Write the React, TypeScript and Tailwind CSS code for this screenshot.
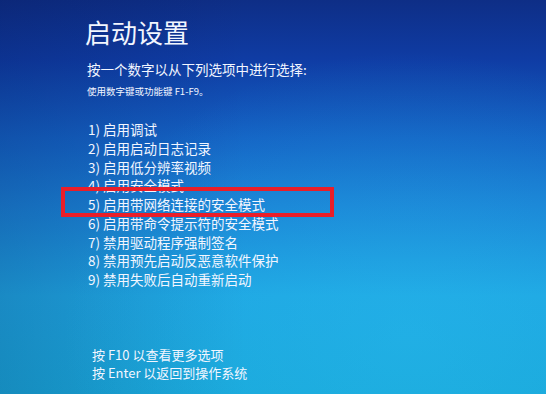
import React from "react";

const items = [
  "1) 启用调试",
  "2) 启用启动日志记录",
  "3) 启用低分辨率视频",
  "4) 启用安全模式",
  "5) 启用带网络连接的安全模式",
  "6) 启用带命令提示符的安全模式",
  "7) 禁用驱动程序强制签名",
  "8) 禁用预先启动反恶意软件保护",
  "9) 禁用失败后自动重新启动",
];

export default function App() {
  return (
    <div className="relative w-[546px] h-[394px] overflow-hidden text-[#f2f6ff] font-['Noto_Sans_CJK_SC','Noto_Sans',sans-serif] bg-[radial-gradient(ellipse_at_75%_85%,rgba(40,190,240,0.35),transparent_60%),linear-gradient(90deg,rgba(0,10,60,0.18),transparent_45%),linear-gradient(180deg,#0e2e86_0%,#0f3ca4_15%,#1462c4_35%,#1a80d4_52%,#1fa6e2_75%,#1aa8da_100%)]">
      <div className="flex flex-col pl-[85px] pt-[17px]">
        <h1 className="text-[26px] leading-[30px] font-normal">启动设置</h1>
        <p className="mt-[13px] pl-[2px] text-[13.5px] leading-[18px]">
          按一个数字以从下列选项中进行选择:
        </p>
        <p className="mt-[6px] pl-[2px] text-[9.5px] leading-[14px]">
          使用数字键或功能键 F1-F9。
        </p>
        <ol className="mt-[22px] pl-[3px] text-[13.5px] leading-[18.75px]">
          {items.map((t, i) => (
            <li key={i} className="relative">
              {t}
              {i === 4 && (
                <span className="absolute left-[-27px] top-[-7.6px] w-[273px] h-[30px] border-[4.5px] border-[#ea1e28]" />
              )}
            </li>
          ))}
        </ol>
        <div className="mt-[57.6px] pl-[7px] text-[13px] leading-[18px]">
          <p>按 F10 以查看更多选项</p>
          <p>按 Enter 以返回到操作系统</p>
        </div>
      </div>
    </div>
  );
}
